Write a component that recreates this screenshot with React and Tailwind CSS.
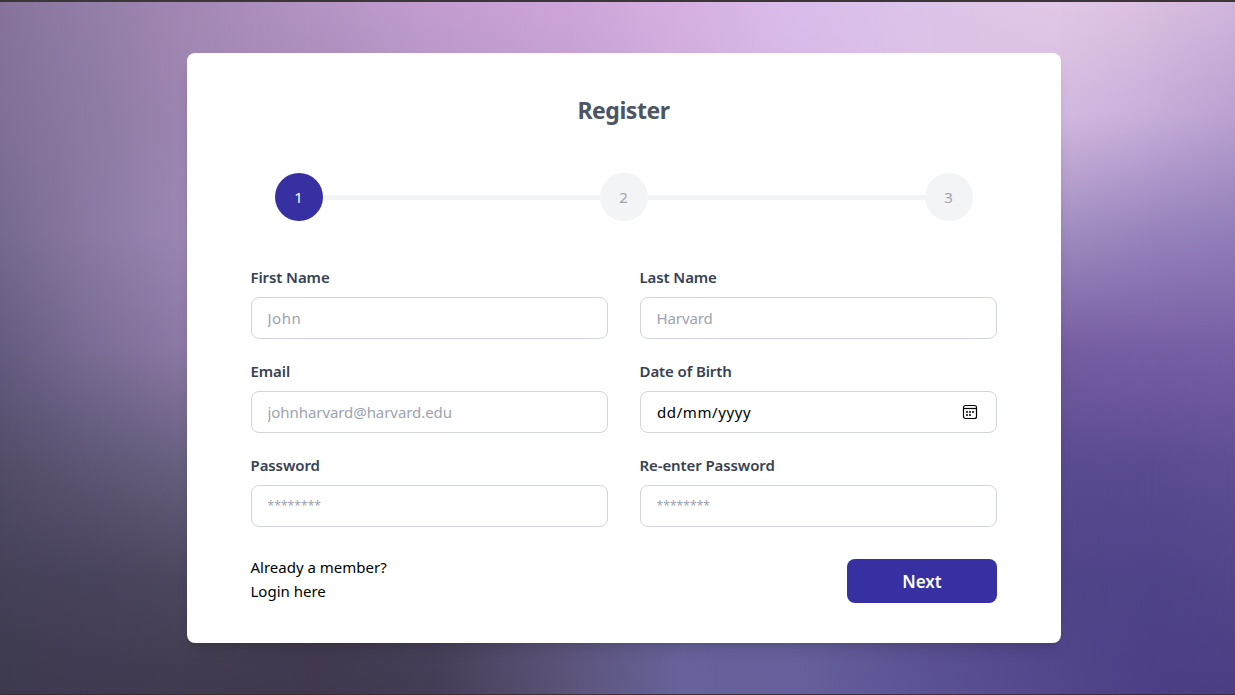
const FONT = "font-['Noto_Sans','Open_Sans',sans-serif]";

// Vertical colour ramps at y = 0, 116, 232, 348, 464, 580, 695 for each x position.
const COLUMNS = [
  { x: 0, colors: ["#87739b", "#807096", "#766a8e", "#665b80", "#534d69", "#454158", "#3d394e"] },
  { x: 95, colors: ["#937fa7", "#8d7ba3", "#8b7aa3", "#7b6d95", "#5f5776", "#48435c", "#3f3a50"] },
  { x: 187, colors: ["#a387b3", "#9d86b1", "#9c87b4", "#8c79a5", "#696080", "#4c475e", "#403a4f"] },
  { x: 310, colors: ["#b394c3", "#a587b5", "#a385b5", "#9c80ae", "#766987", "#443d52", "#40384d"] },
  { x: 430, colors: ["#c29dcf", "#b492c4", "#a385b5", "#9c80ae", "#766987", "#49445e", "#443c55"] },
  { x: 560, colors: ["#cca5d8", "#c09bcc", "#a385b5", "#9c80ae", "#766987", "#5e587e", "#5a5276"] },
  { x: 680, colors: ["#d5b0e0", "#cfaadc", "#a385b5", "#9c80ae", "#766987", "#66619a", "#67639a"] },
  { x: 800, colors: ["#dabdea", "#d5b8e5", "#a385b5", "#9c80ae", "#766987", "#655f9b", "#66609c"] },
  { x: 930, colors: ["#dcc4e8", "#dcc0e6", "#a385b5", "#9c80ae", "#6f5f9f", "#574c8e", "#5b5294"] },
  { x: 1061, colors: ["#e2c8e6", "#d3b9df", "#a18dc0", "#765ea2", "#5b4b90", "#504489", "#52478a"] },
  { x: 1150, colors: ["#dabfe0", "#c6aed9", "#9883bd", "#775fa4", "#5c4b91", "#4f4388", "#4c3f86"] },
  { x: 1235, colors: ["#d0b5dc", "#b9a0cf", "#917eb9", "#775fa4", "#5f4e93", "#52458a", "#4c3e83"] },
];

function Backdrop() {
  return (
    <div className="absolute inset-0 overflow-hidden" aria-hidden="true">
      {COLUMNS.map((column, i) => {
        const start = i === 0 ? -1 : COLUMNS[i - 1].x;
        const end = i === 0 ? 0 : column.x;
        const mask = `linear-gradient(to right, transparent ${start}px, black ${end}px)`;
        return (
          <div
            key={column.x}
            className="absolute inset-0"
            style={{
              backgroundImage: `linear-gradient(to bottom, ${column.colors.join(", ")})`,
              maskImage: mask,
            }}
          />
        );
      })}
    </div>
  );
}

function Step({ number, active }) {
  return (
    <div
      className={
        active
          ? "flex size-12 shrink-0 items-center justify-center rounded-full bg-[#3730a3] pr-px text-white"
          : "flex size-12 shrink-0 items-center justify-center rounded-full bg-[#f3f4f6] pr-px text-[#9ca3af]"
      }
    >
      {number}
    </div>
  );
}

function CalendarIcon() {
  return (
    <svg className="mr-0.5 size-4" viewBox="0 0 16 16" fill="none" stroke="black">
      <rect x="1.5" y="1.5" width="13" height="13" rx="2" strokeWidth="1.2" />
      <path d="M1.5 4.5h13" strokeWidth="1.2" />
      <path d="M4 8h2M7 8h2M10 8h2M4 11h2M7 11h2" strokeWidth="1.6" />
    </svg>
  );
}

const LABEL = "-ml-[0.5px] h-6 text-[15px] leading-6 font-semibold tracking-[-0.1px] text-[#374151]";
const BOX = "mt-2 h-[42px] w-full rounded-lg border border-[#d1d5db] bg-white";

function Field({ label, placeholder, inputClass = "text-[15px]" }) {
  return (
    <label className="block">
      <span className={`block ${LABEL}`}>{label}</span>
      <input
        type="text"
        placeholder={placeholder}
        className={`block ${BOX} px-[15.5px] placeholder:text-[#9ca3af] placeholder:opacity-100 ${inputClass}`}
      />
    </label>
  );
}

export default function App() {
  return (
    <div className={`relative flex h-[695px] w-full justify-center overflow-hidden border-t-2 border-b border-t-[#3b3739] border-b-[#35313a] ${FONT}`}>
      <Backdrop />
      <main className="relative mt-[51px] ml-[13px] h-[590px] w-[874px] rounded-lg bg-white px-16 pt-[39px] shadow-lg">
        <h1 className="pr-px text-center text-[23px] leading-9 font-bold tracking-[-0.45px] text-[#4b5563]">Register</h1>
        <div className="mt-[45px] flex items-center px-6 text-[15px]">
          <Step number="1" active />
          <div className="h-[5px] flex-1 bg-[#f3f4f6]" />
          <Step number="2" />
          <div className="h-[5px] flex-1 bg-[#f3f4f6]" />
          <Step number="3" />
        </div>
        <form>
          <div className="mt-11 grid grid-cols-2 gap-x-8 gap-y-5">
            <Field label="First Name" placeholder="John" inputClass="text-[15px] tracking-[0.5px]" />
            <Field label="Last Name" placeholder="Harvard" inputClass="text-[15px] tracking-[-0.1px]" />
            <Field label="Email" placeholder="johnharvard@harvard.edu" inputClass="text-[15px] tracking-[-0.07px]" />
            <div>
              <div className={LABEL}>Date of Birth</div>
              <div className={`flex items-center justify-between ${BOX} px-4 text-[15px] text-black`}>
                <span className="tracking-[0.6px]">dd/mm/yyyy</span>
                <CalendarIcon />
              </div>
            </div>
            <Field label="Password" placeholder="********" inputClass="pb-0.5 text-[12px] tracking-[0.08px]" />
            <Field label="Re-enter Password" placeholder="********" inputClass="pb-0.5 text-[12px] tracking-[0.08px]" />
          </div>
          <div className="mt-7 flex items-start justify-between">
            <p className="-ml-[0.5px] text-[15px] leading-6 text-black">
              Already a member?
              <br />
              Login here
            </p>
            <button type="button" className="mt-1 h-11 w-[150px] rounded-lg bg-[#3730a3] pt-0.5 text-[17px] font-semibold text-white">
              Next
            </button>
          </div>
        </form>
      </main>
    </div>
  );
}
